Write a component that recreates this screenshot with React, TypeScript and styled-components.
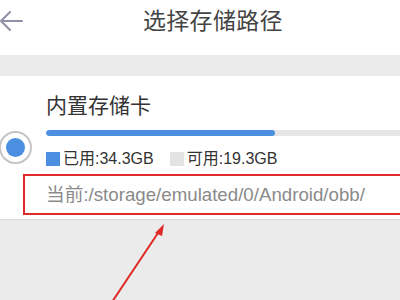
import React from "react";
import styled, { createGlobalStyle } from "styled-components";

const GlobalStyle = createGlobalStyle`
  body {
    margin: 0;
    background: #ebebeb;
    font-family: "Liberation Sans", "Noto Sans CJK SC", sans-serif;
    overflow: hidden;
  }
`;

const Page = styled.div`
  position: relative;
  width: 400px;
  height: 300px;
  overflow: hidden;
`;

const Header = styled.div`
  height: 55px;
  box-sizing: border-box;
  padding-bottom: 13px;
  background: #fff;
  display: flex;
  align-items: center;
`;

const BackIcon = styled.svg`
  width: 24px;
  height: 24px;
  flex-shrink: 0;
  margin-left: -1px;
`;

const Title = styled.div`
  margin-left: 120px;
  font-size: 23px;
  line-height: 26px;
  color: #444;
  letter-spacing: 0.3px;
`;

const Card = styled.div`
  margin-top: 21px;
  background: #fff;
  border-bottom: 1px solid #dcdcdc;
  display: flex;
  align-items: center;
`;

const Radio = styled.div`
  box-sizing: border-box;
  width: 33px;
  height: 33px;
  border: 2px solid #c4c4c4;
  border-radius: 50%;
  display: flex;
  align-items: center;
  justify-content: center;
  margin-left: -1px;
  margin-right: 14px;
  flex-shrink: 0;

  &::after {
    content: "";
    width: 19px;
    height: 19px;
    border-radius: 50%;
    background: #4a8fe0;
  }
`;

const Content = styled.div`
  flex: 1;
  padding: 18px 0 14px;
  min-width: 0;
`;

const StorageName = styled.div`
  font-size: 21px;
  line-height: 24px;
  color: #333;
`;

const Bar = styled.div`
  margin-top: 12px;
  height: 6px;
  background: #e6e6e6;
  border-radius: 3px 0 0 3px;
  overflow: hidden;
`;

const BarFill = styled.div`
  height: 100%;
  background: #4a8fe0;
  border-radius: 3px;
`;

const Legend = styled.div`
  margin-top: 14px;
  display: flex;
  align-items: center;
  gap: 16px;
  font-size: 16px;
  line-height: 18px;
  color: #333;
`;

const LegendItem = styled.div`
  display: flex;
  align-items: center;
  gap: 3px;
`;

const Swatch = styled.span<{ $color: string }>`
  width: 14px;
  height: 14px;
  background: ${(p) => p.$color};
`;

const PathText = styled.div`
  position: relative;
  margin-top: 17px;
  font-size: 18.7px;
  line-height: 20px;
  color: #8a8a8a;
  white-space: nowrap;

  &::before {
    content: "";
    position: absolute;
    left: -23px;
    top: -11px;
    bottom: -10px;
    right: -60px;
    border: 2px solid #e02a2a;
  }
`;

const Annotation = styled.svg`
  position: absolute;
  left: 0;
  top: 0;
  pointer-events: none;
`;

export default function App() {
  const used = 34.3;
  const free = 19.3;
  const pct = (used / (used + free)) * 101;

  return (
    <>
      <GlobalStyle />
      <Page>
        <Header>
          <BackIcon viewBox="0 0 24 24">
            <path
              d="M23 12 H2 M11 3 L2 12 L11 21"
              fill="none"
              stroke="#8e92a4"
              strokeWidth="2"
              strokeLinecap="round"
              strokeLinejoin="round"
            />
          </BackIcon>
          <Title>选择存储路径</Title>
        </Header>
        <Card>
          <Radio />
          <Content>
            <StorageName>内置存储卡</StorageName>
            <Bar>
              <BarFill style={{ width: `${pct}%` }} />
            </Bar>
            <Legend>
              <LegendItem>
                <Swatch $color="#4a8fe0" />
                已用:34.3GB
              </LegendItem>
              <LegendItem>
                <Swatch $color="#e3e3e3" />
                可用:19.3GB
              </LegendItem>
            </Legend>
            <PathText>当前:/storage/emulated/0/Android/obb/</PathText>
          </Content>
        </Card>
        <Annotation width="400" height="300" viewBox="0 0 400 300">
          <line x1="112" y1="302" x2="160" y2="230" stroke="#e02a2a" strokeWidth="2" />
          <polygon points="164,224 155,233 162,236" fill="#e02a2a" />
        </Annotation>
      </Page>
    </>
  );
}
